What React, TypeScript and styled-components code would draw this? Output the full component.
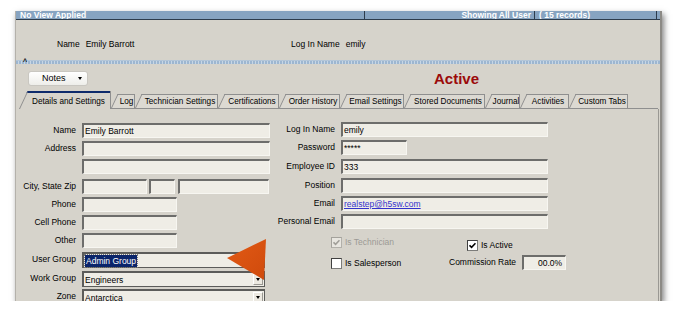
import React from "react";
import styled, { createGlobalStyle } from "styled-components";

const GlobalStyle = createGlobalStyle`
  html, body { margin: 0; padding: 0; background: #fff; }
  body { font-family: "Liberation Sans", Arial, sans-serif; color: #000; }
`;

const Window = styled.div`
  position: relative;
  box-sizing: border-box;
  margin: 11px 0 0 15px;
  width: 647px;
  height: 290px;
  overflow: hidden;
  background: #d6d3cb;
  border-left: 1px solid #b4b1aa;
  border-right: 2px solid #8c8a85;
  box-shadow: 2px 3px 6px rgba(0, 0, 0, 0.5);
  font-size: 8.5px;
`;

const TopBar = styled.div`
  display: flex;
  align-items: flex-end;
  height: 8px;
  overflow: hidden;
  background: #87a4c1;
  border-bottom: 1px solid #2d3c4c;
  color: #fff;
  font-weight: bold;
  font-size: 8.5px;
`;

const BarCell = styled.div<{ $w?: number }>`
  display: flex;
  align-items: center;
  box-sizing: border-box;
  height: 8px;
  line-height: 8px;
  white-space: nowrap;
  ${(p) => (p.$w ? `width: ${p.$w}px;` : "")}
  padding: 0 3px 0 4px;
  border-right: 1px solid #2d3c4c;
`;

const BarRight = styled.span`
  margin-left: auto;
`;

const Header = styled.div`
  display: flex;
  height: 40px;
  box-sizing: border-box;
  padding: 19px 0 0 41px;
  line-height: 11px;
`;

const HeaderItem = styled.div<{ $w: number }>`
  display: flex;
  gap: 6px;
  width: ${(p) => p.$w}px;
`;

const Splitter = styled.div`
  position: relative;
  height: 4px;
  background: repeating-linear-gradient(90deg, #9db6d0 0 2px, #c7d6e5 2px 3px);
  border-top: 1px solid #b3c6d9;
  box-sizing: border-box;
`;

const Caret = styled.span`
  position: absolute;
  left: 7px;
  top: -3px;
  font-size: 7px;
  line-height: 7px;
  font-weight: bold;
`;

const NotesRow = styled.div`
  display: flex;
  align-items: center;
  height: 27px;
`;

const NotesButton = styled.div`
  display: flex;
  align-items: center;
  justify-content: space-between;
  box-sizing: border-box;
  margin: 1px 0 0 12px;
  width: 60px;
  height: 15px;
  padding: 0 5px 0 13px;
  background: linear-gradient(#ffffff, #eeeeea);
  border: 1px solid #c9c7c1;
  border-radius: 3px;
  font-size: 9px;
`;

const Triangle = styled.span`
  width: 0;
  height: 0;
  border-left: 2.5px solid transparent;
  border-right: 2.5px solid transparent;
  border-top: 3px solid #000;
`;

const Status = styled.div`
  margin-left: 346px;
  margin-top: 2px;
  color: #9b0a0a;
  font-weight: bold;
  font-size: 15px;
`;

const TabStrip = styled.div`
  display: flex;
  align-items: flex-end;
  height: 17px;
  margin: 0 2px 0 3px;
  border-bottom: 1px solid #8f8f8f;
`;

const Tab = styled.div<{ $w: number; $active?: boolean }>`
  position: relative;
  z-index: ${(p) => (p.$active ? 1 : 0)};
  overflow: hidden;
  display: flex;
  align-items: center;
  justify-content: center;
  box-sizing: border-box;
  width: ${(p) => p.$w}px;
  height: ${(p) => (p.$active ? 18 : 14)}px;
  margin-bottom: ${(p) => (p.$active ? -1 : 0)}px;
  padding: ${(p) => (p.$active ? "2px" : "1px")} 1px 0 9px;
  border-right: 1px solid #8f8f8f;
  white-space: nowrap;
  font-size: 8.2px;

  &::before {
    content: "";
    position: absolute;
    inset: 0;
    z-index: -1;
    background: ${(p) => (p.$active ? "#d6d3cb" : "#dcd9d2")};
    border-left: 1px solid #8f8f8f;
    border-top: ${(p) => (p.$active ? "2px solid #0d2a6b" : "1px solid #8f8f8f")};
    transform-origin: bottom left;
    transform: skewX(-25deg);
  }
`;

const Panel = styled.div`
  position: relative;
  display: flex;
  box-sizing: border-box;
  width: 643px;
  height: 200px;
  padding-top: 14px;
  border-right: 1px solid #9a9893;
`;

const Column = styled.div<{ $w: number }>`
  display: flex;
  flex-direction: column;
  width: ${(p) => p.$w}px;
`;

const Row = styled.div<{ $lw: number; $mt?: number }>`
  display: grid;
  grid-template-columns: ${(p) => p.$lw}px auto;
  column-gap: 6px;
  align-items: start;
  height: 18px;
  margin-top: ${(p) => p.$mt ?? 0}px;
`;

const Label = styled.div`
  text-align: right;
  white-space: nowrap;
  line-height: 15px;
`;

const Fields = styled.div`
  display: flex;
`;

const Field = styled.div<{ $w: number; $gap?: number; $right?: boolean }>`
  box-sizing: border-box;
  width: ${(p) => p.$w}px;
  height: 15px;
  margin-right: ${(p) => p.$gap ?? 0}px;
  padding: 0 3px 0 1px;
  background: #efede6;
  border-top: 2px solid #6d6d6b;
  border-left: 2px solid #6d6d6b;
  border-right: 1px solid #f7f6f1;
  border-bottom: 1px solid #f7f6f1;
  line-height: 12px;
  white-space: nowrap;
  overflow: hidden;
  text-align: ${(p) => (p.$right ? "right" : "left")};
`;

const Select = styled.div<{ $w: number }>`
  display: flex;
  align-items: center;
  box-sizing: border-box;
  width: ${(p) => p.$w}px;
  height: 16px;
  padding-left: 1px;
  background: #efede6;
  border: 1px solid #5c5c5a;
  border-top-width: 2px;
  border-left-width: 2px;
  line-height: 12px;
`;

const SelectText = styled.span<{ $selected?: boolean }>`
  flex: 1;
  ${(p) =>
    p.$selected
      ? `flex: 0 0 auto; margin-right: auto; padding: 0 1px; background: #0a246a; color: #fff; outline: 1px dotted #777;`
      : ""}
`;

const DropButton = styled.span`
  display: flex;
  align-items: center;
  justify-content: center;
  box-sizing: border-box;
  width: 10px;
  height: 11px;
  margin-right: 1px;
  background: #ece9e1;
  border: 1px solid #9a9893;
  border-top-color: #fff;
  border-left-color: #fff;
`;

const Link = styled.span`
  color: #3333cc;
  text-decoration: underline;
`;

const CheckGrid = styled.div`
  display: grid;
  grid-template-columns: 118px auto;
  row-gap: 4px;
  margin: 4px 0 0 61px;
`;

const CheckItem = styled.label<{ $disabled?: boolean; $indent?: number; $mt?: number }>`
  display: flex;
  align-items: center;
  gap: 3px;
  height: 12px;
  margin-top: ${(p) => p.$mt ?? 0}px;
  padding-left: ${(p) => p.$indent ?? 0}px;
  color: ${(p) => (p.$disabled ? "#9c9a95" : "#000")};
  font-size: 8.5px;
  white-space: nowrap;
`;

const Box = styled.span<{ $disabled?: boolean }>`
  display: flex;
  align-items: center;
  justify-content: center;
  box-sizing: border-box;
  width: 11px;
  height: 11px;
  background: ${(p) => (p.$disabled ? "#e8e6e0" : "#fff")};
  border: 1px solid ${(p) => (p.$disabled ? "#b2b0aa" : "#7c7c7a")};
  border-top-color: ${(p) => (p.$disabled ? "#a4a29c" : "#404040")};
  border-left-color: ${(p) => (p.$disabled ? "#a4a29c" : "#404040")};
`;

const RateGroup = styled.div`
  display: flex;
  align-items: center;
  gap: 6px;
`;

const ArrowMark = styled.svg`
  position: absolute;
  left: 205px;
  top: 125px;
`;

function Check({ checked, disabled }: { checked?: boolean; disabled?: boolean }) {
  return (
    <Box $disabled={disabled}>
      {checked && (
        <svg width="7" height="7" viewBox="0 0 7 7">
          <path
            d="M0.5 3.3 L2.6 5.4 L6.5 1.2"
            fill="none"
            stroke={disabled ? "#a09e98" : "#000"}
            strokeWidth="1.6"
          />
        </svg>
      )}
    </Box>
  );
}

function Dropdown({ w, value, selected }: { w: number; value: string; selected?: boolean }) {
  return (
    <Select $w={w}>
      <SelectText $selected={selected}>{value}</SelectText>
      <DropButton>
        <Triangle />
      </DropButton>
    </Select>
  );
}

const tabs: [string, number][] = [
  ["Details and Settings", 92],
  ["Log", 24],
  ["Technician Settings", 83],
  ["Certifications", 61],
  ["Order History", 61],
  ["Email Settings", 64],
  ["Stored Documents", 81],
  ["Journal", 35],
  ["Activities", 49],
  ["Custom Tabs", 59],
];

export default function App() {
  return (
    <>
      <GlobalStyle />
      <Window>
        <TopBar>
          <BarCell $w={349}>No View Applied</BarCell>
          <BarCell $w={170}>
            <BarRight>Showing All User</BarRight>
          </BarCell>
          <BarCell $w={122}>( 15 records)</BarCell>
        </TopBar>

        <Header>
          <HeaderItem $w={234}>
            <span>Name</span>
            <span>Emily Barrott</span>
          </HeaderItem>
          <HeaderItem $w={200}>
            <span>Log In Name</span>
            <span>emily</span>
          </HeaderItem>
        </Header>

        <Splitter>
          <Caret>^</Caret>
        </Splitter>

        <NotesRow>
          <NotesButton>
            Notes
            <Triangle />
          </NotesButton>
          <Status>Active</Status>
        </NotesRow>

        <TabStrip>
          {tabs.map(([name, w], i) => (
            <Tab key={name} $w={w} $active={i === 0}>
              {name}
            </Tab>
          ))}
        </TabStrip>

        <Panel>
          <Column $w={254}>
            <Row $lw={60}>
              <Label>Name</Label>
              <Field $w={188}>Emily Barrott</Field>
            </Row>
            <Row $lw={60}>
              <Label>Address</Label>
              <Field $w={188} />
            </Row>
            <Row $lw={60}>
              <Label />
              <Field $w={188} />
            </Row>
            <Row $lw={60} $mt={2}>
              <Label>City, State Zip</Label>
              <Fields>
                <Field $w={65} $gap={2} />
                <Field $w={26} $gap={3} />
                <Field $w={91} />
              </Fields>
            </Row>
            <Row $lw={60}>
              <Label>Phone</Label>
              <Field $w={95} />
            </Row>
            <Row $lw={60}>
              <Label>Cell Phone</Label>
              <Field $w={95} />
            </Row>
            <Row $lw={60}>
              <Label>Other</Label>
              <Field $w={95} />
            </Row>
            <Row $lw={60} $mt={1}>
              <Label>User Group</Label>
              <Dropdown w={183} value="Admin Group" selected />
            </Row>
            <Row $lw={60} $mt={1}>
              <Label>Work Group</Label>
              <Dropdown w={183} value="Engineers" />
            </Row>
            <Row $lw={60}>
              <Label>Zone</Label>
              <Dropdown w={183} value="Antarctica" />
            </Row>
          </Column>

          <Column $w={300}>
            <Row $lw={65} $mt={-1}>
              <Label>Log In Name</Label>
              <Field $w={207}>emily</Field>
            </Row>
            <Row $lw={65}>
              <Label>Password</Label>
              <Field $w={66}>*****</Field>
            </Row>
            <Row $lw={65} $mt={1}>
              <Label>Employee ID</Label>
              <Field $w={207}>333</Field>
            </Row>
            <Row $lw={65} $mt={1}>
              <Label>Position</Label>
              <Field $w={207} />
            </Row>
            <Row $lw={65}>
              <Label>Email</Label>
              <Field $w={207}>
                <Link>realstep@h5sw.com</Link>
              </Field>
            </Row>
            <Row $lw={65}>
              <Label>Personal Email</Label>
              <Field $w={207} />
            </Row>

            <CheckGrid>
              <CheckItem $disabled>
                <Check checked disabled />
                Is Technician
              </CheckItem>
              <CheckItem $indent={18} $mt={3}>
                <Check checked />
                Is Active
              </CheckItem>
              <CheckItem $mt={2}>
                <Check />
                Is Salesperson
              </CheckItem>
              <RateGroup>
                <Label>Commission Rate</Label>
                <Field $w={44} $right>
                  00.0%
                </Field>
              </RateGroup>
            </CheckGrid>
          </Column>

          <ArrowMark width="50" height="52" viewBox="0 0 50 52">
            <defs>
              <linearGradient id="arrowFill" x1="0" y1="0" x2="1" y2="1">
                <stop offset="0" stopColor="#e25a15" />
                <stop offset="1" stopColor="#cf4a0c" />
              </linearGradient>
            </defs>
            <polygon points="6,24 45,5 43,46" fill="url(#arrowFill)" />
          </ArrowMark>
        </Panel>
      </Window>
    </>
  );
}
